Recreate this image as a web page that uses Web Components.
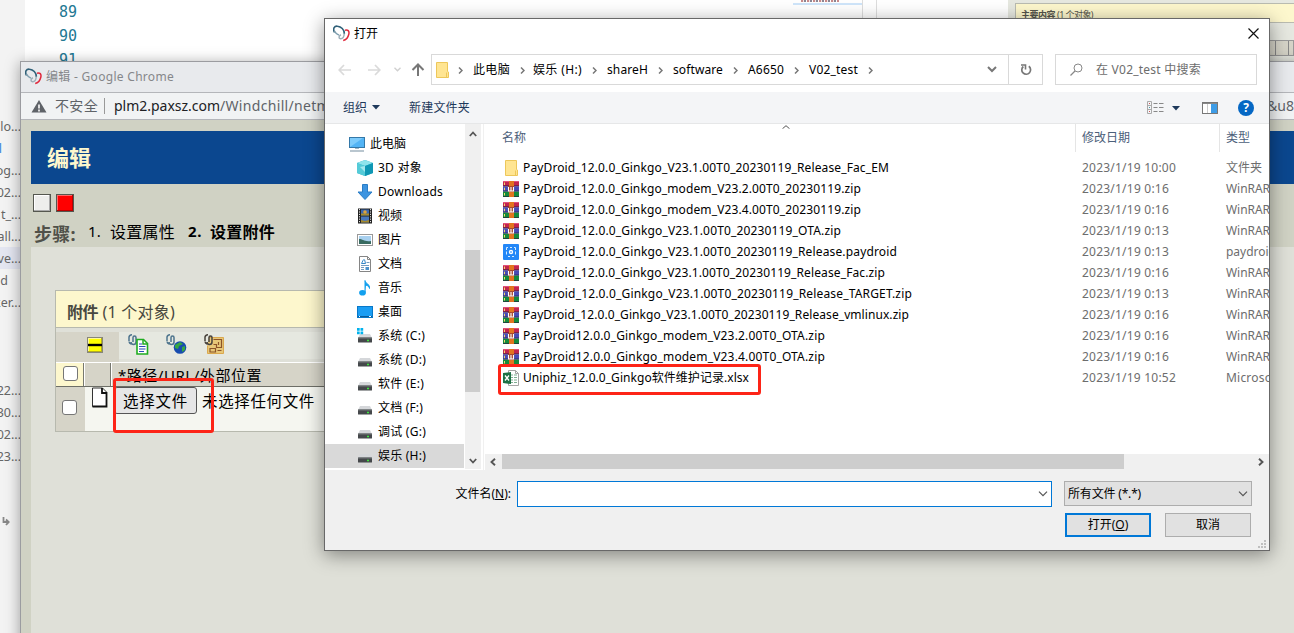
<!DOCTYPE html>
<html lang="zh-CN">
<head>
<meta charset="utf-8">
<title>编辑</title>
<style>
html,body{margin:0;height:633px;overflow:hidden;background:#fff}
body{font:12px/16px "Noto Sans","Noto Sans CJK SC",sans-serif;color:#000}
</style>
</head>
<body>
<desk-top></desk-top>
<script>
const svg=(w,h,body)=>`<svg width="${w}" height="${h}" viewBox="0 0 ${w} ${h}" style="display:block" fill="none">${body}</svg>`;
const drive='<path d="M3 6h10l2 4H1z" fill="#d5d7da"/><rect x="1" y="9.500" width="14" height="5" rx=".6" fill="#45484b"/><path d="M1 10h14" stroke="#75787b"/><path d="M10 12.500h2" stroke="#3fe63f" stroke-width="1.600"/>';
const clip=c=>`<path d="M5 8V3.500a1.500 1.500 0 0 1 3 0V8a2.500 2.500 0 0 1-5 0M1 7V3a3 3 0 0 1 3-2.200M1 7.500a3 3 0 0 0 2 2.500" stroke="${c}" stroke-width="1.500"/>`;
const ICONS={
logo:svg(17,17,'<path d="M1.500 7.500C-.5 3.500 1.500.8 4.500 1.200 8 1.500 11.500 4.500 11.300 9" stroke="#2f6078" stroke-width="1.600"/><path d="M1.500 6c1 2.500 3 3.500 4.500 4.200" stroke="#7d9dad" stroke-width="1.400"/><path d="M11.300 8.500c-.3 3-1.800 5.500-3.800 5.300-2-.3-2-3 .5-4" stroke="#9fb0ba" stroke-width="1.500"/><path d="M12 5.200c2.800-1 4.600.8 3.800 4-.7 3-3 5.800-5.600 6.300" stroke="#e0283c" stroke-width="1.500"/>'),
warn:svg(16,14,'<path d="M8 1l7.500 12.500H.5z" fill="#5f6368"/><path d="M8 5.500v4M8 10.500v2" stroke="#fff" stroke-width="1.600"/>'),
folder:svg(16,16,'<path d="M2.500.5h11v9l1 .5v5.500h-12z" fill="#ffe592" stroke="#edc75a"/><path d="M12.500 10.500v5" stroke="#edc75a"/>'),
rar:svg(16,16,'<rect y="0" width="16" height="5.300" fill="#c2264f"/><rect y="5.300" width="16" height="5.300" fill="#484bb5"/><rect y="10.600" width="16" height="5.400" fill="#158a3c"/><path d="M0 .5h16" stroke="#e2517b"/><path d="M0 4.800h16M0 10h16M0 15.500h16" stroke="#28223f" stroke-opacity=".65"/><path d="M1.500 1.500v2.500M1.500 6.700v2.500M1.500 12v2.500" stroke="#f4d66b"/><rect x="6" width="5" height="16" fill="#e2741f"/><rect x="5" y="5" width="6" height="6" fill="#a8492f"/><path d="M5.500 6v4h5V6M8 6v4" stroke="#fff" stroke-width="1.100"/>'),
pay:svg(16,16,'<rect width="16" height="16" rx="1" fill="#2387f7"/><path d="M5 3.500H3.500V6M3.500 7.500v3M5 12.500h2M9 12.500h2M12.500 10.500v-3M12.500 6V3.500H11M9 3.500H7" stroke="#d6edff"/><circle cx="8" cy="8" r="2.200" fill="#fff"/><path d="M8 7v2" stroke="#2387f7"/>'),
xls:svg(16,16,'<path d="M5.500.5h7l3 3v12h-10z" fill="#fff" stroke="#a5a5a5"/><path d="M12.500.5v3h3" stroke="#a5a5a5"/><path d="M8 5h2M11 5h3M8 7.500h2M11 7.500h3M8 10h2M11 10h3M8 12.500h2M11 12.500h3" stroke="#7fae93"/><path d="M0 3L8 2v12l-8-1z" fill="#1e7145"/><path d="M2 5.500l4 5M6 5.500l-4 5" stroke="#fff" stroke-width="1.300"/>'),
pc:svg(16,16,'<rect x=".5" y="1.500" width="15" height="10" fill="#53b4f5" stroke="#3478a8"/><path d="M1 11L14 2H1z" fill="#7dcbfb"/><path d="M6 12.500h4" stroke="#9fb4c4"/><path d="M1 15h14" stroke="#8ba0b0" stroke-width="1.200"/>'),
cube:svg(16,16,'<path d="M8 0l8 3v10l-8 3-8-3V3z" fill="#26b3c7"/><path d="M8 0l8 3-8 3-8-3z" fill="#8fe4ec"/><path d="M0 3l8 3v10l-8-3z" fill="#55cbd8"/><path d="M8 6l8-3v10l-8 3z" fill="#0f97b4"/><path d="M3 7l5-1v6z" fill="#a5e8ee"/>'),
down:svg(16,16,'<path d="M5.500.5h5V8h4.500l-7 7.500L1 8h4.500z" fill="#3d94e0" stroke="#2a7dc6"/>'),
film:svg(16,16,'<rect x="1" y=".5" width="14" height="15" fill="#222"/><path d="M2.500 1v14M13.500 1v14" stroke="#ddd" stroke-dasharray="1.200 1.200"/><rect x="4" y="1.500" width="8" height="6" fill="#3966b0"/><rect x="4" y="8.500" width="8" height="6" fill="#4676bd"/><path d="M4 5.500h8v2H4zM4 12l4 1 4-1v2.500H4z" fill="#a68a2d"/><circle cx="8" cy="4" r="1.800" fill="#dfa33a"/>'),
photo:svg(16,16,'<rect x=".5" y="2.500" width="15" height="11" fill="#fff" stroke="#999"/><rect x="2" y="4" width="12" height="8" fill="#a8d0ef"/><path d="M2 7c4 0 5 3 12 2v3H2z" fill="#396b61"/>'),
doc:svg(16,16,'<path d="M2.500.5h8l3 3v12h-11z" fill="#fff" stroke="#858585"/><path d="M10.500.5v3h3" stroke="#858585"/><path d="M6.500 3.500l-2 4h4l-1-4" stroke="#3387c8"/><path d="M9.500 6.500h3M4 9.500h8M4 11.500h3M4 13.500h3" stroke="#739cc0"/><rect x="8.500" y="11" width="3.500" height="3" fill="#4b91ca"/>'),
note:svg(16,16,'<ellipse cx="5.500" cy="12.700" rx="3.400" ry="2.800" fill="#12a0ee"/><path d="M8 12.500V.500c.5 3.200 5 3.500 4.500 8-.4-2.300-2-3-3.500-3.300" fill="#12a0ee" stroke="#12a0ee"/>'),
desk:svg(16,16,'<rect x=".5" y="2.500" width="15" height="11" fill="#1a9df3" stroke="#0878c8"/><path d="M1 12.500h14" stroke="#095b99"/><path d="M2 12.500h1M12 12.500h2" stroke="#fff"/>'),
drive:svg(16,16,drive),
win:svg(16,16,drive+'<path d="M0 0h2.700v2.700H0zM3.500 0h2.700v2.700H3.500zM0 3.500h2.700v2.700H0zM3.500 3.500h2.700v2.700H3.500z" fill="#00b2ed"/>'),
left:svg(14,12,'<path d="M13 6H1.500M6 1L1.200 6 6 11" stroke="#dadada" stroke-width="1.700"/>'),
right:svg(14,12,'<path d="M1 6h11.500M8 1l4.800 5L8 11" stroke="#dadada" stroke-width="1.700"/>'),
up:svg(14,14,'<path d="M7 13V2M1.500 7L7 1.500 12.500 7" stroke="#777" stroke-width="2"/>'),
tiny:svg(7,5,'<path d="M.5.700l3 3 3-3" stroke="#d0d0d0" stroke-width="1.400"/>'),
crumb:svg(5,7,'<path d="M1 .5l3 3-3 3" stroke="#777" stroke-width="1.500"/>'),
chev:svg(10,7,'<path d="M1 1l4 4 4-4" stroke="#777" stroke-width="2"/>'),
thin:svg(10,6,'<path d="M1 .7l4 4 4-4" stroke="#555" stroke-width="1.200"/>'),
sup:svg(8,6,'<path d="M.8 5L4 1.500 7.200 5" stroke="#555" stroke-width="1.800"/>'),
sdown:svg(8,6,'<path d="M.8 1L4 4.500 7.200 1" stroke="#555" stroke-width="1.800"/>'),
sleft:svg(6,8,'<path d="M5 .8L1.500 4 5 7.200" stroke="#555" stroke-width="1.900"/>'),
sright:svg(6,8,'<path d="M1 .8L4.500 4 1 7.200" stroke="#555" stroke-width="1.900"/>'),
sort:svg(8,4,'<path d="M.5 3.700L4 .7l3.500 3" stroke="#555"/>'),
tri:svg(8,5,'<path d="M0 0h8L4 4.500z" fill="#1e395b"/>'),
reload:svg(12,12,'<path d="M8.800 2.300A4.400 4.400 0 1 1 3.300 2.500" stroke="#777" stroke-width="1.700"/><path d="M1 1h4.500v4.500" stroke="#777" stroke-width="1.600"/>'),
find:svg(13,13,'<circle cx="8" cy="5" r="4" stroke="#888"/><path d="M5 8L.5 12.500" stroke="#888" stroke-width="1.200"/>'),
x:svg(11,11,'<path d="M.5.5l10 10M10.500.5l-10 10" stroke="#111" stroke-width="1.200"/>'),
view:svg(17,13,'<path d="M.5.500h4v12h-4zM.5 4.500h4M.5 8.500h4" stroke="#aaa"/><path d="M2 2.500h1M2 10.500h1" stroke="#c55"/><path d="M2 6.500h1" stroke="#49a"/><path d="M6.500 2.500h4M12 2.500h4.500M6.500 6.500h4M12 6.500h4.500M6.500 10.500h4M12 10.500h4.500" stroke="#888"/>'),
pane:svg(16,12,'<rect x=".5" y=".5" width="15" height="11" fill="#fff" stroke="#777"/><path d="M1 1.500h14" stroke="#888"/><path d="M5.500 2v9" stroke="#ccc"/><rect x="9" y="2" width="6" height="9" fill="#3e9ce6"/>'),
grip:svg(8,8,'<path d="M6 0h2v2H6zM3 3h2v2H3zM6 3h2v2H6zM0 6h2v2H0zM3 6h2v2H3zM6 6h2v2H6z" fill="#bfbfbf"/>'),
minus:svg(16,16,'<rect x=".5" y=".5" width="15" height="15" fill="#ff0" stroke="#86867a"/><path d="M1 1.500h14M1.500 1v13" stroke="#fff89b"/><path d="M1 14.500h14M14.500 1v14" stroke="#b4ad20"/><path d="M1 8h14" stroke="#000" stroke-width="2.400"/>'),
cdoc:svg(21,21,clip('#4e748d')+'<path d="M9 5.500h6.500l4 4v10.500H9z" fill="#fff" stroke="#20ac20" stroke-width="1.600"/><path d="M15 5v5h5" stroke="#20ac20" stroke-width="1.500"/><path d="M11 10h3M11 12.500h6.500M11 15h6.500M11 17.500h5" stroke="#2849b5" stroke-width="1.200"/>'),
cglobe:svg(21,21,clip('#4e748d')+'<circle cx="14" cy="13.500" r="6.300" fill="#184caf"/><path d="M9 11l5-3 3 2-4 2-1 3-3-1zM16 13l3-1v4l-3 2z" fill="#36a741"/>'),
cbox:svg(21,21,'<path d="M5 3.500h14.500v16H3.500v-8" fill="#e7c778" stroke="#dba84e"/><path d="M9.500 5.500h8v8h-5v-3h-3M14.500 8v3M6 14.500h5.500v3.500H6zM13.500 16.500h4" stroke="#8c5428" stroke-width="1.200"/>'+clip('#47413b')),
page:svg(17,21,'<path d="M1.500 1h10l4 4v14.500h-14z" fill="#fff" stroke="#333"/><path d="M11 1v5h5M15.500 5v14.500h-14" stroke="#111" stroke-width="1.800"/>'),
wrap:svg(8,9,'<path d="M1.500 0v5H6M4 2.500l2.700 2.500L4 8" stroke="#888" stroke-width="1.800"/>')
};
class Base extends HTMLElement{
  connectedCallback(){
    if(this.shadowRoot)return;
    const r=this.attachShadow({mode:'open'});
    r.innerHTML='<style>*{box-sizing:border-box}'+(this.constructor.css||'')+'</style>'+this.html();
    this.ready&&this.ready();
  }
  html(){return '<slot></slot>'}
}
const def=(n,c)=>customElements.define(n,c);
/* A single line of text that tracks itself out to the width in "w". */
def('fit-text',class extends Base{
  static css=':host{display:inline-block;white-space:pre;flex:none;justify-self:start}';
  ready(){
    const w=+this.getAttribute('w');
    if(!w)return;
    const n=[...this.textContent].length, now=this.getBoundingClientRect().width;
    if(now)this.style.letterSpacing=((w-now)/n)+'px';
  }
});
def('ui-icon',class extends Base{
  static css=':host{display:inline-block;flex:none}';
  html(){return ICONS[this.getAttribute('name')]}
});
def('tree-item',class extends Base{
  static css=':host{display:flex;align-items:center;height:24px;padding-left:32px;gap:5px}:host([root]){padding-left:24px}:host([on]){background:#d9d9d9}';
  html(){return `<ui-icon name="${this.getAttribute('icon')}"></ui-icon><fit-text w="${this.getAttribute('w')}">${this.getAttribute('label')}</fit-text>`}
});
def('file-row',class extends Base{
  static css=':host{display:grid;grid-template-columns:579px 144px 1fr;height:21px;align-items:center;overflow:hidden}.n{display:flex;gap:4px;align-items:center}.m{color:#6d6d6d}';
  html(){const a=n=>this.getAttribute(n);
    return `<div class="n"><ui-icon name="${a('icon')}"></ui-icon><fit-text w="${a('w')}">${a('name')}</fit-text></div><fit-text class="m" w="${a('date').length>14?94:87}">${a('date')}</fit-text><fit-text class="m" w="${a('tw')}">${a('type')}</fit-text>`}
});
def('crumb-item',class extends Base{
  static css=':host{display:flex;align-items:center;flex:none}ui-icon{margin:1px 0 0 10px}';
  html(){return `<fit-text w="${this.getAttribute('w')}">${this.getAttribute('label')}</fit-text><ui-icon name="crumb"></ui-icon>`}
});
def('open-dialog',class extends Base{
  static css=`
:host{display:flex;flex-direction:column;width:946px;height:533px;border:1px solid #686868;background:#fff;box-shadow:0 4px 18px rgba(0,0,0,.42)}
.title{height:35px;display:flex;align-items:center;padding:0 10px 6px 8px;gap:4px}.title fit-text{flex:1}
.nav{height:38px;display:flex;align-items:flex-start;padding-right:12px}
.arrows{width:106px;height:31px;display:flex;align-items:center;padding-left:13px}
.box{height:31px;border:1px solid #d9d9d9;display:flex;align-items:center}
.addr{width:612px;padding-left:2px}.addr>.ch{margin-left:auto;margin-right:11px}
.rl{width:34px;height:29px;border-left:1px solid #d9d9d9;display:flex;align-items:center;justify-content:center}
.search{width:202px;margin-left:12px;padding-left:14px;gap:13px;color:#6d6d6d}
.tools{height:32px;background:#f4f5f7;border-bottom:1px solid #e6e7e8;display:flex;align-items:center;padding:0 15px 0 18px;color:#1e395b}
.help{width:16px;height:16px;border-radius:50%;background:#0567c4;color:#fff;font:bold 12px/16px "Noto Sans",sans-serif;text-align:center}
.body{height:346px;display:flex}
.tree{width:139px;padding-top:8px}
.vs{width:16px;height:345px;margin-left:1px;background:#f0f0f0;display:flex;flex-direction:column;align-items:center;padding:7px 0 5px;}
.vs .t{width:15px;height:142px;background:#cdcdcd;align-self:flex-start;margin:113px 0 auto}
.main{flex:1;margin-left:2px;border-left:1px solid #f0f0f0;display:flex;flex-direction:column;min-width:0}
.head{height:28px;display:grid;grid-template-columns:591px 144px 1fr;color:#4c607a;position:relative}
.head>div{padding:6px 0 0 6px;border-left:1px solid #e5e5e5}.head>div:first-child{border:0;padding-left:18px}
.head ui-icon{position:absolute;left:298px;top:1px}
.files{height:302px;padding:5px 0 0 19px;overflow:hidden}
.hs{height:16px;background:#f0f0f0;margin-left:1px;display:flex;align-items:center;padding:0 5px}
.hs .t{width:622px;height:15px;background:#cdcdcd;margin:0 auto 1px 6px}
.foot{flex:1;background:#f0f0f0;display:grid;grid-template-columns:192px 535px 188px;column-gap:0;padding-top:11px;align-content:start}
.foot label{text-align:right;padding:5px 6px 0 0}
.inp{height:26px;border:1px solid #0078d7;background:#fff;display:flex;align-items:center;justify-content:flex-end;padding-right:3px}
.sel{margin-left:12px;width:188px;height:25px;border:1px solid #adadad;background:#e1e1e1;display:flex;align-items:center;justify-content:space-between;padding:0 3px 0 3px}
.btns{grid-column:3;display:flex;gap:14px;margin:6px 0 0 13px;width:186px}
.btn{width:86px;flex:none;height:24px;border:1px solid #adadad;background:#e1e1e1;display:flex;align-items:center;justify-content:center;padding-bottom:1px}
.btn.p{border:2px solid #0078d7}
.grip{display:flex;justify-content:flex-end;padding:0 3px 2px;background:#f0f0f0}`;
  html(){
    const d='2023/1/19 ';
    const P='PayDroid_12.0.0_Ginkgo_';
    const files=[['folder',P+'V23.1.00T0_20230119_Release_Fac_EM',366,'10:00','文件夹',36],['rar',P+'modem_V23.2.00T0_20230119.zip',338,'0:16'],['rar',P+'modem_V23.4.00T0_20230119.zip',338,'0:16'],['rar',P+'V23.1.00T0_20230119_OTA.zip',318,'0:13'],['pay',P+'V23.1.00T0_20230119_Release.paydroid',374,'0:13','paydroid',50],['rar',P+'V23.1.00T0_20230119_Release_Fac.zip',362,'0:16'],['rar',P+'V23.1.00T0_20230119_Release_TARGET.zip',389,'0:13'],['rar',P+'V23.1.00T0_20230119_Release_vmlinux.zip',386,'0:16'],['rar','PayDroid12.0.0_Ginkgo_modem_V23.2.00T0_OTA.zip',302,'0:16'],['rar','PayDroid12.0.0_Ginkgo_modem_V23.4.00T0_OTA.zip',302,'0:16'],['xls','Uniphiz_12.0.0_Ginkgo软件维护记录.xlsx',226,'10:52','Microsoft',55]];
    const tree=[['pc','此电脑',36],['cube','3D 对象',44],['down','Downloads',65],['film','视频',24],['photo','图片',24],['doc','文档',24],['note','音乐',24],['desk','桌面',24],['win','系统 (C:)',47],['drive','系统 (D:)',48],['drive','软件 (E:)',46],['drive','文档 (F:)',45],['drive','调试 (G:)',48],['drive','娱乐 (H:)',48]];
    const crumbs=[['此电脑',37,10],['娱乐 (H:)',49,8],['shareH',41,10],['software',50,10],['A6650',36,10],['V02_test',49,10]];
    return `
<div class="title"><ui-icon name="logo"></ui-icon><fit-text>打开</fit-text><ui-icon name="x"></ui-icon></div>
<div class="nav"><div class="arrows"><ui-icon name="left"></ui-icon><ui-icon name="right" style="margin-left:15px"></ui-icon><ui-icon name="tiny" style="margin-left:13px"></ui-icon><ui-icon name="up" style="margin-left:10px"></ui-icon></div>
<div class="box addr"><ui-icon name="folder"></ui-icon><ui-icon name="crumb" style="margin:1px 0 0 8px"></ui-icon>${crumbs.map(c=>`<crumb-item label="${c[0]}" w="${c[1]}" style="margin-left:${c[2]}px"></crumb-item>`).join('')}<ui-icon class="ch" name="chev"></ui-icon><div class="rl"><ui-icon name="reload"></ui-icon></div></div>
<div class="box search"><ui-icon name="find"></ui-icon><fit-text w="105">在 V02_test 中搜索</fit-text></div></div>
<div class="tools"><fit-text w="24">组织</fit-text><ui-icon name="tri" style="margin:0 29px 0 5px"></ui-icon><fit-text w="61">新建文件夹</fit-text><ui-icon name="view" style="margin-left:auto"></ui-icon><ui-icon name="tri" style="margin:2px 22px 0 8px"></ui-icon><ui-icon name="pane"></ui-icon><div class="help" style="margin-left:20px">?</div></div>
<div class="body"><div class="tree">${tree.map((t,i)=>`<tree-item icon="${t[0]}" label="${t[1]}" w="${t[2]}"${i?'':' root'}${i==13?' on':''}></tree-item>`).join('')}</div>
<div class="vs"><ui-icon name="sup"></ui-icon><div class="t"></div><ui-icon name="sdown"></ui-icon></div>
<div class="main"><div class="head"><div>名称</div><div>修改日期</div><div>类型</div><ui-icon name="sort"></ui-icon></div>
<div class="files">${files.map(f=>`<file-row icon="${f[0]}" name="${f[1]}" w="${f[2]}" date="${d+f[3]}" type="${f[4]||'WinRAR ZIP'}" tw="${f[5]||65}"></file-row>`).join('')}</div>
<div class="hs"><ui-icon name="sleft"></ui-icon><div class="t"></div><ui-icon name="sright"></ui-icon></div></div></div>
<div class="foot"><label>文件名(<u>N</u>):</label><div class="inp"><ui-icon name="thin"></ui-icon></div><div class="sel"><fit-text w="73">所有文件 (*.*)</fit-text><ui-icon name="thin"></ui-icon></div>
<div class="btns"><div class="btn p"><span>打开(<u>O</u>)</span></div><div class="btn">取消</div></div></div>
<div class="grip"><ui-icon name="grip"></ui-icon></div>`}
});
def('check-box',class extends Base{
  static css=':host{display:block;width:15px;height:15px;border:1px solid #767676;border-radius:3px;background:#fff;box-sizing:border-box}';
});
def('chrome-window',class extends Base{
  static css=`
:host{display:flex;flex-direction:column;width:1290px;height:600px;border:1px solid #9b9ca0;background:#d0d2c4;box-shadow:0 2px 14px rgba(0,0,0,.36)}
.t{height:31px;background:#e8eaed;border-bottom:1px solid #b4b6ba;display:flex;align-items:center;padding:0 0 1px 4px;gap:4px;color:#85878a}
.u{height:27px;background:#f1f3f4;border-bottom:1px solid #b4b6ba;display:flex;align-items:center;padding-left:10px;font-size:14px;color:#5f6368}
.u i{width:1px;height:16px;background:#999;margin:0 9px 0 6px}.u b{font-weight:400;color:#202124}
.banner{height:53px;margin:11px 0 0 10px;background:#0b478f;color:#fdf7cd;font-weight:700;font-size:22px;line-height:53px;padding-left:16px}
.sq{display:flex;gap:5px;margin:10px 0 0 12px}.sq div{width:18px;height:18px;border:1px solid #55574f;background:#eeeeec;box-shadow:inset -1px -1px #aaa,inset 1px 1px #fff}
.sq div+div{background:red;box-shadow:inset -1px -1px #b00,inset 1px 1px #f66}
.steps{height:35px;display:flex;align-items:center;padding:5px 0 0 13px;font-size:16px}
.page{flex:1;margin-left:10px;background:#dfe0d8;padding:43px 45px 0 24px}
.panel{border:1px solid #b7b9ae;border-right:0;height:142px;position:relative}
.ph{height:37px;background:#fdf7cd;border-bottom:1px solid #b7b9ae;display:flex;align-items:center;padding:6px 0 0 11px;font-size:16px;color:#484840}
.tb{height:34px;display:flex;align-items:flex-end;background:#dfe0d8}
.tb .a{width:63px;height:30px;background:#d6d4c8;padding:5px 0 0 31px}.tb .b{flex:1;height:27px;background:#e6e8e0;margin-bottom:3px;display:flex;align-items:center;padding:0 0 2px 9px;gap:17px}
.h{height:25px;display:grid;grid-template-columns:28px 27px 1fr;border-bottom:1px solid #6d6e66;background:#d6d4c8;border-top:1px solid #fff}
.h>div{border-right:1px solid #77786f;border-left:1px solid #fff}
.h>div:first-child{background:#fdf7cd;border-left:0;padding:3px 0 0 7px}.h .p{font-size:15px;line-height:24px;padding-left:6px;border-right:0;overflow:hidden}
.r{height:44px;display:grid;grid-template-columns:29px 29px 1fr;background:#f5f6f0}
.r .c{background:#d6d4c8;padding:13px 0 0 6px}.r .i{padding:0 0 0 6px;border-right:1px solid #ddd}
.r .f{display:flex;font-size:15.5px;padding-top:0}.btn{height:27px;width:83px;border:1px solid #555;border-radius:3px;background:#e6e6e6;line-height:27px;padding-left:8px;flex:none}.f>fit-text{line-height:29px;margin-left:5px}
.red{position:absolute;left:57px;top:87px;width:101px;height:55px;border:3px solid #fd2417;border-radius:3px}`;
  html(){return `
<div class="t"><ui-icon name="logo"></ui-icon><fit-text w="128">编辑 - Google Chrome</fit-text></div>
<div class="u"><ui-icon name="warn" style="margin-right:8px"></ui-icon><fit-text w="43">不安全</fit-text><i></i><b><fit-text w="106">plm2.paxsz.com</fit-text></b><fit-text w="110">/Windchill/netm</fit-text><fit-text style="margin-left:937px">&amp;u8=</fit-text></div>
<div class="banner"><fit-text w="44">编辑</fit-text></div><div class="sq"><div></div><div></div></div>
<div class="steps"><fit-text w="42" style="font-weight:700;color:#50514a;font-size:18px;padding-top:4px">步骤:</fit-text><fit-text w="13" style="margin:0 9px 2px 12px;font-size:15px">1.</fit-text><fit-text w="65">设置属性</fit-text><fit-text w="14" style="margin:0 8px 2px 13px;font-weight:700;font-size:15px">2.</fit-text><fit-text w="65" style="font-weight:700">设置附件</fit-text></div>
<div class="page"><div class="panel"><div class="ph"><fit-text w="31" style="font-weight:700">附件</fit-text><fit-text w="77"> (1 个对象)</fit-text></div>
<div class="tb"><div class="a"><ui-icon name="minus"></ui-icon></div><div class="b"><ui-icon name="cdoc"></ui-icon><ui-icon name="cglobe"></ui-icon><ui-icon name="cbox"></ui-icon></div></div>
<div class="h"><div><check-box></check-box></div><div></div><div class="p"><fit-text w="144">*路径/URL/外部位置</fit-text></div></div>
<div class="r"><div class="c"><check-box></check-box></div><div class="i"><ui-icon name="page"></ui-icon></div><div class="f"><div class="btn"><fit-text w="65">选择文件</fit-text></div><fit-text w="113">未选择任何文件</fit-text></div></div>
<div class="red"></div></div></div>`}
});
def('editor-backdrop',class extends Base{
  static css=`
:host{display:flex;width:1294px;height:633px;background:#fff}
.side{width:25px;background:#f3f3f3;padding-top:115px;font-size:12.5px;color:#666}
.side div{height:22px;line-height:24px;width:21px;display:flex;justify-content:flex-end;overflow:hidden;white-space:pre}
.side .on{background:#e4e6f1;width:25px;padding-right:4px}.side .b{color:#3584dd;padding-right:19px}.side .g{height:66px}
.nums{width:768px;padding-left:34px;font:15px/24px "DejaVu Sans Mono",monospace;color:#237893}
.nums div{height:24px}
.map{width:70px;height:20px;border-right:1px solid #ddd;display:flex;flex-direction:column}
.map i{height:2px;width:38px;margin-left:8px;background:repeating-linear-gradient(90deg,#c98a8a 0 2px,#f5e8e8 2px 3px,#8a8795 3px 5px,#fff 5px 6px)}.map b{height:2px;margin-top:1px;background:#cfe5fa}
.gap{width:14px;height:20px;border-right:1px solid #ddd}.blank{width:131px}
.web{flex:1;background:#e6e8e0;padding:3px 0 0 7px}.y{height:20px;background:#fdf7cd;border:1px solid #b9bbb0;border-right:0;padding:3px 0 0 5px;font-size:9px;color:#55554c;display:flex;gap:2px}
.cells{height:16px;margin-top:17px;background:repeating-linear-gradient(90deg,#d6d4c8 0 12px,#888 12px 13px);border:1px solid #999}`;
  html(){return `<div class="side">${['lo...','l','og...','02...','t_...','tall...','ve...','d','ker...','','22...','30...','02...','23...'].map((s,i)=>`<div class="${i==1?'b':i==6?'on':i==9?'g':''}"${i==7?' style="padding-right:13px"':''}>${s}</div>`).join('')}<ui-icon name="wrap" style="margin:50px 0 0 2px"></ui-icon></div>
<div class="nums"><div>89</div><div>90</div><div>91</div></div><div class="map"><i></i><b></b></div><div class="gap"></div><div class="blank"></div>
<div class="web"><div class="y"><fit-text w="34" style="font-weight:700">主要内容</fit-text><fit-text w="36">(1 个对象)</fit-text></div><div class="cells"></div></div>`}
});
def('desk-top',class extends Base{
  static css=`:host{display:block;position:relative;width:1294px;height:633px;overflow:hidden}
chrome-window{position:absolute;left:20px;top:61px}open-dialog{position:absolute;left:324px;top:18px}
.mark{position:absolute;left:498px;top:364px;width:263px;height:31px;border:3px solid #fd2417;border-radius:3px}`;
  html(){return '<editor-backdrop></editor-backdrop><chrome-window></chrome-window><open-dialog></open-dialog><div class="mark"></div>'}
});
</script>
</body>
</html>
